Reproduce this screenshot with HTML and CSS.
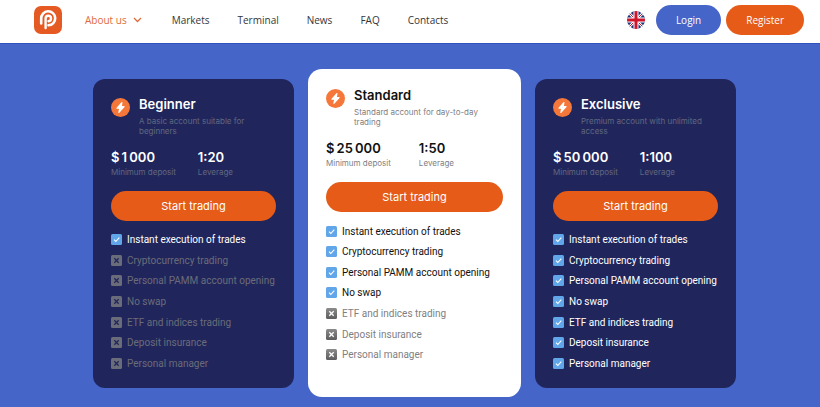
FILE: index.html
```html
<!DOCTYPE html>
<html lang="en">
<head>
  <meta charset="UTF-8">
  <meta name="viewport" content="width=device-width, initial-scale=1.0">
  <title>Trading accounts</title>
  <link rel="stylesheet" href="styles.css">
</head>
<body>
  <!-- shared icons -->
  <svg class="sprite" aria-hidden="true">
    <defs>
      <linearGradient id="grey" x1="0" y1="0" x2="0" y2="1">
        <stop offset="0" stop-color="#8b8b8b"/>
        <stop offset="1" stop-color="#5d5d5f"/>
      </linearGradient>
    </defs>
    <symbol id="yes" viewBox="0 0 11 11">
      <rect width="11" height="11" rx="1.5" fill="#62a6ea"/>
      <path d="M3 5.7l1.8 1.8L8.3 3.6" fill="none" stroke="#fff" stroke-width="1.1"/>
    </symbol>
    <symbol id="no" viewBox="0 0 11 11">
      <rect width="11" height="11" rx="1.5" fill="url(#grey)"/>
      <path d="M3.3 3.3l4.4 4.4M7.7 3.3L3.3 7.7" fill="none" stroke="#fff" stroke-width="1.3"/>
    </symbol>
    <symbol id="no-dark" viewBox="0 0 11 11">
      <rect width="11" height="11" rx="1.5" fill="#6b6c79"/>
      <path d="M3.3 3.3l4.4 4.4M7.7 3.3L3.3 7.7" fill="none" stroke="#20265c" stroke-width="1.3"/>
    </symbol>
    <symbol id="bolt" viewBox="0 0 19 19">
      <circle cx="9.5" cy="9.5" r="9.5" fill="#f5783a"/>
      <path d="M10.9 4.6L6 10.2h2.800l-.9 4.200 5.200-5.800h-2.900z" fill="#fff" stroke="#fff" stroke-width="1.2" stroke-linejoin="round"/>
    </symbol>
  </svg>

  <header class="header">
    <a href="#" class="logo" aria-label="Home">
      <svg viewBox="0 0 28 28" width="28" height="28">
        <rect width="28" height="28" rx="7" fill="#e55a22"/>
        <path d="M7.2 17.4V12.6a7 7 0 1 1 7.300 6.700" fill="none" stroke="#fff" stroke-width="2.6" stroke-linecap="round"/>
        <path d="M11.6 22v-9.500a2.700 2.700 0 1 1 2.900 2.700" fill="none" stroke="#fff" stroke-width="2.4" stroke-linecap="round"/>
      </svg>
    </a>
    <nav class="nav">
      <a href="#" class="active">About us
        <svg viewBox="0 0 9 6" width="9" height="6"><path d="M1 1l3.5 3.5L8 1" fill="none" stroke="#df6b3a" stroke-width="1.3"/></svg>
      </a>
      <a href="#">Markets</a>
      <a href="#">Terminal</a>
      <a href="#">News</a>
      <a href="#">FAQ</a>
      <a href="#">Contacts</a>
    </nav>
    <div class="actions">
      <button type="button" class="lang" aria-label="English">
        <svg viewBox="0 0 18 18" width="18" height="18">
          <clipPath id="round"><circle cx="9" cy="9" r="9"/></clipPath>
          <g clip-path="url(#round)">
            <rect width="18" height="18" fill="#1d3478"/>
            <path d="M0 0l18 18M18 0L0 18" stroke="#fff" stroke-width="2.6"/>
            <path d="M0 0l18 18M18 0L0 18" stroke="#d0142c" stroke-width="1"/>
            <path d="M9 0v18M0 9h18" stroke="#fff" stroke-width="5"/>
            <path d="M9 0v18M0 9h18" stroke="#d0142c" stroke-width="3"/>
          </g>
        </svg>
      </button>
      <button type="button" class="btn login">Login</button>
      <button type="button" class="btn register">Register</button>
    </div>
  </header>

  <main class="plans">
    <section class="card">
      <div class="card-head">
        <svg class="bolt"><use href="#bolt"/></svg>
        <div>
          <h2>Beginner</h2>
          <p>A basic account suitable for beginners</p>
        </div>
      </div>
      <dl class="stats">
        <div><dt>Minimum deposit</dt><dd>$&thinsp;1&thinsp;000</dd></div>
        <div><dt>Leverage</dt><dd>1:20</dd></div>
      </dl>
      <button type="button" class="btn start">Start trading</button>
      <ul class="features">
        <li><svg><use href="#yes"/></svg>Instant execution of trades</li>
        <li class="off"><svg><use href="#no-dark"/></svg>Cryptocurrency trading</li>
        <li class="off"><svg><use href="#no-dark"/></svg>Personal PAMM account opening</li>
        <li class="off"><svg><use href="#no-dark"/></svg>No swap</li>
        <li class="off"><svg><use href="#no-dark"/></svg>ETF and indices trading</li>
        <li class="off"><svg><use href="#no-dark"/></svg>Deposit insurance</li>
        <li class="off"><svg><use href="#no-dark"/></svg>Personal manager</li>
      </ul>
    </section>

    <section class="card featured">
      <div class="card-head">
        <svg class="bolt"><use href="#bolt"/></svg>
        <div>
          <h2>Standard</h2>
          <p>Standard account for day-to-day trading</p>
        </div>
      </div>
      <dl class="stats">
        <div><dt>Minimum deposit</dt><dd>$&thinsp;25&thinsp;000</dd></div>
        <div><dt>Leverage</dt><dd>1:50</dd></div>
      </dl>
      <button type="button" class="btn start">Start trading</button>
      <ul class="features">
        <li><svg><use href="#yes"/></svg>Instant execution of trades</li>
        <li><svg><use href="#yes"/></svg>Cryptocurrency trading</li>
        <li><svg><use href="#yes"/></svg>Personal PAMM account opening</li>
        <li><svg><use href="#yes"/></svg>No swap</li>
        <li class="off"><svg><use href="#no"/></svg>ETF and indices trading</li>
        <li class="off"><svg><use href="#no"/></svg>Deposit insurance</li>
        <li class="off"><svg><use href="#no"/></svg>Personal manager</li>
      </ul>
    </section>

    <section class="card">
      <div class="card-head">
        <svg class="bolt"><use href="#bolt"/></svg>
        <div>
          <h2>Exclusive</h2>
          <p>Premium account with unlimited access</p>
        </div>
      </div>
      <dl class="stats">
        <div><dt>Minimum deposit</dt><dd>$&thinsp;50&thinsp;000</dd></div>
        <div><dt>Leverage</dt><dd>1:100</dd></div>
      </dl>
      <button type="button" class="btn start">Start trading</button>
      <ul class="features">
        <li><svg><use href="#yes"/></svg>Instant execution of trades</li>
        <li><svg><use href="#yes"/></svg>Cryptocurrency trading</li>
        <li><svg><use href="#yes"/></svg>Personal PAMM account opening</li>
        <li><svg><use href="#yes"/></svg>No swap</li>
        <li><svg><use href="#yes"/></svg>ETF and indices trading</li>
        <li><svg><use href="#yes"/></svg>Deposit insurance</li>
        <li><svg><use href="#yes"/></svg>Personal manager</li>
      </ul>
    </section>
  </main>
</body>
</html>
```
FILE: styles.css
```css
* {
  box-sizing: border-box;
}
body {
  margin: 0;
  font-family: Inter, sans-serif;
  font-size: 10px;
  background: #4565c9;
  color: #fff;
}
h2, p, dl, dd, ul {
  margin: 0;
  padding: 0;
}
.sprite {
  display: block;
  width: 0;
  height: 0;
}
.header {
  display: flex;
  align-items: center;
  padding: 5px 16px 8px 34px;
  background: #fff;
  border-bottom: 1px solid #2f50bd;
  font-family: "Open Sans", sans-serif;
}
.logo {
  display: flex;
  margin-right: 23px;
}
.nav {
  display: flex;
  gap: 28px;
}
.nav a {
  color: #33363b;
  text-decoration: none;
  white-space: nowrap;
}
.nav .active {
  display: flex;
  align-items: center;
  gap: 6px;
  margin-right: 2px;
  color: #df6b3a;
}
.actions {
  display: flex;
  align-items: center;
  gap: 5px;
  margin-left: auto;
}
.btn {
  height: 30px;
  padding: 0 20px;
  border: none;
  border-radius: 15px;
  background: #e55b17;
  color: #fff;
  font-family: inherit;
  font-size: 10px;
  cursor: pointer;
}
.lang {
  display: flex;
  margin-right: 6px;
  padding: 0;
  border: none;
  background: none;
  cursor: pointer;
}
.login {
  background: #4565c9;
}
.plans {
  display: grid;
  grid-template-columns: minmax(0, 201fr) minmax(0, 213fr) minmax(0, 201fr);
  gap: 14px;
  align-items: center;
  padding: 25px 84px 10px 93px;
}
.card {
  padding: 17px 18px 14px;
  border-radius: 12px;
  background: #20265c;
}
.card-head {
  display: flex;
  gap: 9px;
}
.bolt {
  flex: none;
  width: 19px;
  height: 19px;
  margin-top: 2px;
}
.card h2 {
  font-size: 13px;
  font-weight: 600;
  line-height: 16px;
}
.card p {
  margin-top: 4px;
  font-size: 8px;
  line-height: 10px;
  color: #62667f;
}
.stats {
  display: flex;
  gap: 22px;
  margin-top: 13px;
}
.stats div {
  display: flex;
  flex-direction: column-reverse;
}
.stats dt {
  font-size: 8px;
  line-height: 12px;
  color: #62667f;
}
.stats dd {
  font-size: 13px;
  font-weight: 600;
  line-height: 17px;
}
.start {
  display: block;
  width: 100%;
  margin-top: 13px;
  font-size: 11px;
}
.features {
  display: grid;
  grid-auto-rows: 1fr;
  min-height: 144px;
  margin-top: 9px;
  font-family: Roboto, sans-serif;
  list-style: none;
}
.features li {
  display: flex;
  align-items: center;
  gap: 5px;
  white-space: nowrap;
}
.features svg {
  width: 11px;
  height: 11px;
}
.features .off {
  color: #6b6c79;
}
.featured {
  padding-top: 18px;
  padding-bottom: 32px;
  border-radius: 14px;
  background: #fff;
  color: #111;
}
.featured .stats {
  gap: 28px;
}
.featured p, .featured dt, .featured .off {
  color: #808083;
}
```
